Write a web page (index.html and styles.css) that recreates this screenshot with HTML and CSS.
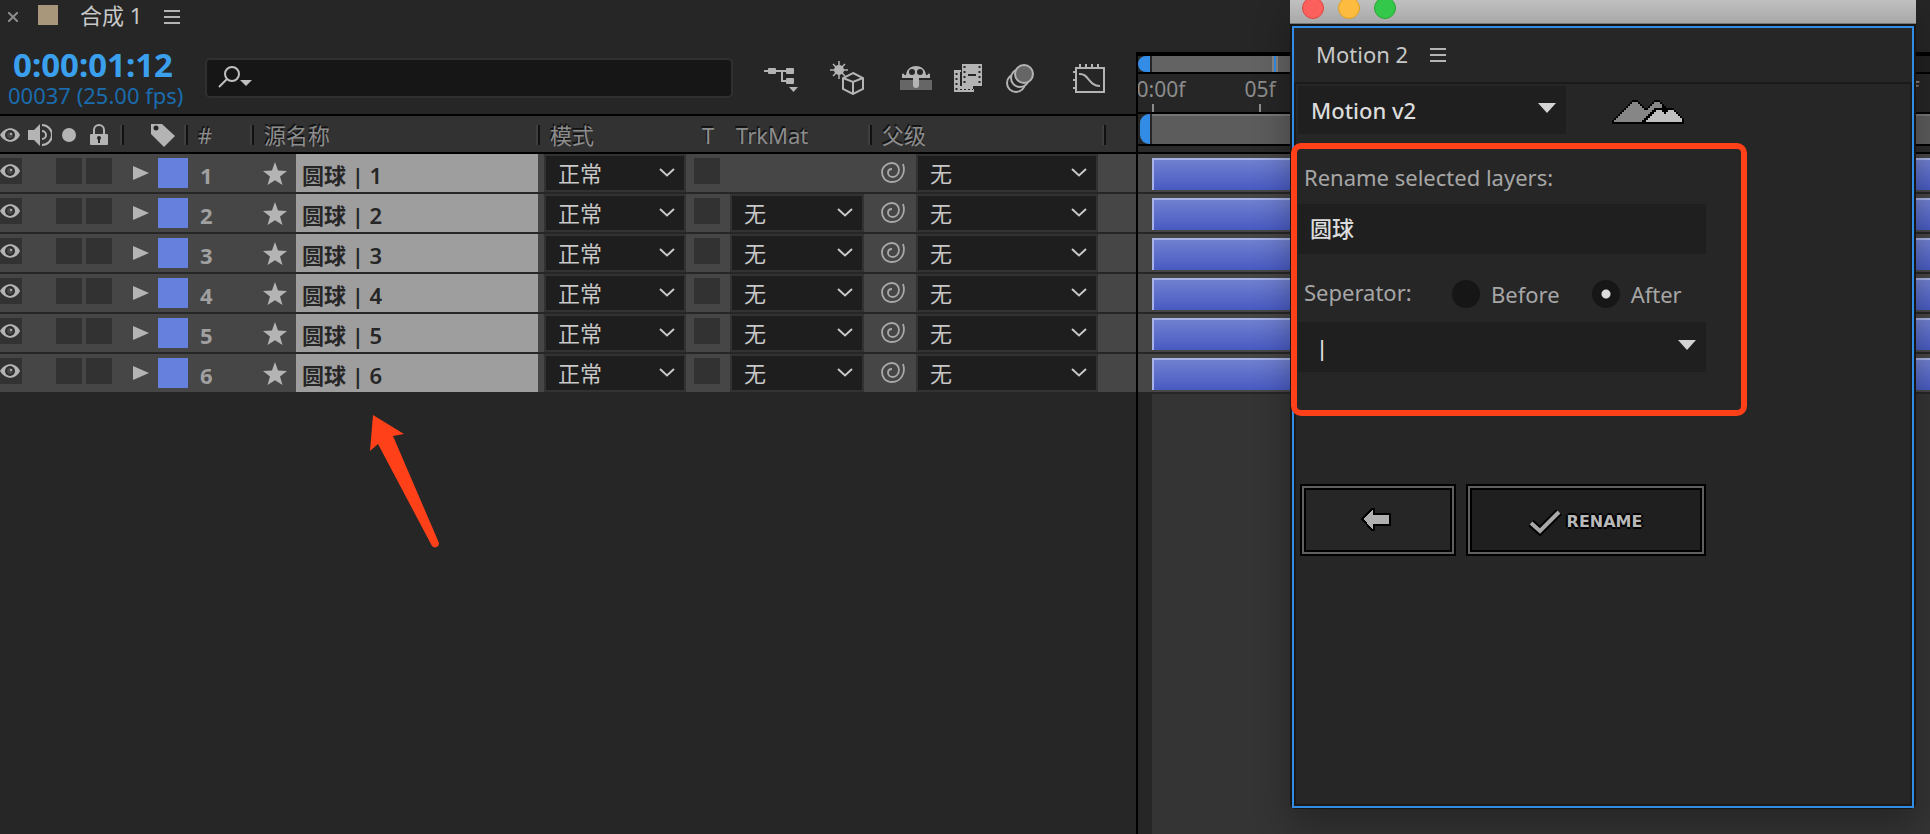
FILE: index.html
```
<!DOCTYPE html>
<html lang="zh-CN">
<head>
<meta charset="utf-8">
<title>合成 1</title>
<link rel="stylesheet" href="styles.css">
</head>
<body>
<svg class="defs" aria-hidden="true">
  <symbol id="eye" viewBox="0 0 22 16"><path d="M0 8C5 -1 16 -1 20 8C16 17 5 17 0 8Z" fill="#b4b4b4"/><circle cx="10" cy="8" r="5" fill="#2e2e2e"/><circle cx="10" cy="8" r="3" fill="#4a4a4a"/><circle cx="11" cy="7" r="1" fill="#ccc"/></symbol>
  <symbol id="star" viewBox="0 0 24 24"><path d="M12 0L15 8.500L24 9L17 14.500L19.500 23L12 18.200L4.500 23L7 14.500L0 9L9 8.500Z" fill="#b4b4b4"/></symbol>
  <symbol id="chevron" viewBox="0 0 16 10"><path d="M1 1L8 7.500L15 1" fill="none" stroke="#c8c8c8" stroke-width="2"/></symbol>
  <symbol id="swirl" viewBox="0 0 24 22"><path d="M22 2C25 11 20 20 11 20C4 20 1 15 1 10C1 5 6 1 11 1C16 1 18 5 18 8C18 12 15 15 12 15C9 15 7 13 7 11C7 9 8 7 11 7" fill="none" stroke="#a8a8a8" stroke-width="1.800"/></symbol>
  <symbol id="twirl" viewBox="0 0 16 14"><path d="M0 0L16 7L0 14Z" fill="#b4b4b4"/></symbol>
  <symbol id="menu" viewBox="0 0 16 14"><path d="M0 1H16M0 7H16M0 13H16" stroke="#b4b4b4" stroke-width="2"/></symbol>
  <symbol id="drop" viewBox="0 0 18 10"><path d="M0 0H18L9 10Z" fill="#d4d4d4"/></symbol>
</svg>

<main class="workspace">
  <section class="layers-panel">
    <header class="tab">
      <button class="icon-btn" aria-label="关闭"><svg width="10" height="10"><path d="M0 0L10 10M10 0L0 10" stroke="#8c8c8c" stroke-width="2"/></svg></button>
      <span class="swatch"></span>
      <h1 class="tab-title">合成 1</h1>
      <button class="icon-btn" aria-label="菜单"><svg width="16" height="14"><use href="#menu"/></svg></button>
    </header>

    <div class="toolbar">
      <div class="time">
        <div class="timecode">0:00:01:12</div>
        <div class="frames">00037 (25.00 fps)</div>
      </div>
      <label class="search">
        <svg width="36" height="24"><circle cx="14" cy="8" r="7" fill="none" stroke="#c0c0c0" stroke-width="2"/><path d="M9 13L1 21" stroke="#c0c0c0" stroke-width="2"/><path d="M22 14H34L28 20Z" fill="#c0c0c0"/></svg>
        <input type="text" aria-label="搜索">
      </label>
      <div class="tools">
        <button class="tool" aria-label="流程图"><svg width="34" height="32"><path d="M0 9H28M18 9V19H24" fill="none" stroke="#b4b4b4" stroke-width="2"/><rect x="4" y="6" width="8" height="6" rx="1" fill="#b4b4b4"/><rect x="22" y="6" width="8" height="6" rx="1" fill="#b4b4b4"/><rect x="22" y="16" width="8" height="6" rx="1" fill="#b4b4b4"/><path d="M25 25H34L29.500 30Z" fill="#b4b4b4"/></svg></button>
        <button class="tool" aria-label="草图 3D"><svg width="34" height="34"><circle cx="9" cy="9" r="5" fill="#b4b4b4"/><path d="M9 0V18M0 9H18M3 3L15 15M15 3L3 15" stroke="#b4b4b4" stroke-width="1.500"/><path d="M23 12L33 17V28L23 33L13 28V17Z" fill="#262626" stroke="#b4b4b4" stroke-width="2"/><path d="M13 17L23 21L33 17M23 21V33" fill="none" stroke="#b4b4b4" stroke-width="2"/></svg></button>
      </div>
      <div class="tools">
        <button class="tool narrow" aria-label="隐藏"><svg width="32" height="30"><rect y="17" width="32" height="10" fill="#666"/><path d="M2 15V11C4 9 4 13 6 12C7 0 25 0 26 12C28 13 28 9 30 11V15Z" fill="#b4b4b4"/><path d="M13 11H19V22A3 3 0 0 1 13 22Z" fill="#b4b4b4"/><circle cx="12" cy="9" r="3" fill="#262626"/><circle cx="20" cy="9" r="3" fill="#262626"/><rect x="13" y="12" width="6" height="6" fill="#b4b4b4"/></svg></button>
        <button class="tool narrow" aria-label="帧混合"><svg width="28" height="30"><rect x="8" y="1" width="20" height="22" fill="#b4b4b4"/><path d="M0 7H7V9H6V23H19V26H20V29H0Z" fill="#b4b4b4"/><path d="M10.500 3V22M25.500 3V22" stroke="#262626" stroke-width="2" stroke-dasharray="2 3"/><path d="M14 12H22" stroke="#262626" stroke-width="2"/><path d="M2.500 10V27" stroke="#262626" stroke-width="2" stroke-dasharray="2 3"/><path d="M6 26.500H19" stroke="#262626" stroke-dasharray="2 2"/></svg></button>
        <button class="tool narrow" aria-label="运动模糊"><svg width="28" height="30"><g stroke="#b4b4b4" stroke-width="2"><circle cx="10" cy="20" r="9" fill="#262626"/><circle cx="14" cy="15" r="9" fill="#262626"/><circle cx="18" cy="11" r="9" fill="#666"/></g></svg></button>
      </div>
      <div class="tools">
        <button class="tool" aria-label="图表编辑器"><svg width="32" height="32"><path d="M3 6H31V30H3ZM7 6V2M13 6V2M19 6V2M25 6V2M3 10H0M3 18H0M3 26H0" fill="none" stroke="#b4b4b4" stroke-width="2"/><path d="M6 12C16 11 15 24 27 24" fill="none" stroke="#b4b4b4" stroke-width="2"/></svg></button>
      </div>
    </div>

    <table class="layers">
      <colgroup><col class="c-av"><col class="c-label"><col class="c-num"><col class="c-name"><col class="c-mode"><col class="c-t"><col class="c-trk"><col class="c-parent"><col class="c-rest"></colgroup>
      <thead>
        <tr>
          <th class="sep"><div class="av-head">
            <svg width="22" height="16"><use href="#eye"/></svg>
            <svg width="24" height="24"><path d="M0 7H6L12 1V23L6 17H0Z" fill="#b4b4b4"/><path d="M14 8A4 4 0 0 1 14 16M14 2A10 10 0 0 1 14 22" fill="none" stroke="#b4b4b4" stroke-width="2"/></svg>
            <svg width="14" height="14"><circle cx="7" cy="7" r="7" fill="#b4b4b4"/></svg>
            <svg width="18" height="22"><rect y="10" width="18" height="11" rx="1" fill="#b4b4b4"/><path d="M4 10V6A5 5 0 0 1 14 6V10" fill="none" stroke="#b4b4b4" stroke-width="2"/><circle cx="9" cy="14" r="2" fill="#262626"/><rect x="8" y="14" width="2" height="5" fill="#262626"/></svg>
          </div></th>
          <th class="sep"><svg class="tag" width="24" height="24"><path d="M0 1H11L24 13L13 24L0 11Z" fill="#b4b4b4"/><circle cx="5" cy="5" r="2.500" fill="#262626"/></svg></th>
          <th class="sep">#</th>
          <th class="sep">源名称</th>
          <th>模式</th>
          <th class="t-head">T</th>
          <th class="sep trk-head">TrkMat</th>
          <th class="sep">父级</th>
          <th></th>
        </tr>
      </thead>
      <tbody>
        <tr>
          <td class="av"><div class="switches"><i class="box eye"><svg width="22" height="16"><use href="#eye"/></svg></i><i class="box"></i><i class="box"></i></div></td>
          <td><div class="label"><svg width="16" height="14"><use href="#twirl"/></svg><i class="color"></i></div></td>
          <td class="num">1</td>
          <td class="name-cell"><div class="name"><span class="kind"><svg width="24" height="24"><use href="#star"/></svg></span><span class="name-text">圆球 | 1</span></div></td>
          <td class="mode"><label class="pick"><select aria-label="模式"><option>正常</option></select><svg width="16" height="10"><use href="#chevron"/></svg></label></td>
          <td><i class="box t-box"></i></td>
          <td></td>
          <td><div class="parent"><svg width="24" height="22"><use href="#swirl"/></svg><label class="pick"><select aria-label="父级"><option>无</option></select><svg width="16" height="10"><use href="#chevron"/></svg></label></div></td>
          <td></td>
        </tr>
        <tr>
          <td class="av"><div class="switches"><i class="box eye"><svg width="22" height="16"><use href="#eye"/></svg></i><i class="box"></i><i class="box"></i></div></td>
          <td><div class="label"><svg width="16" height="14"><use href="#twirl"/></svg><i class="color"></i></div></td>
          <td class="num">2</td>
          <td class="name-cell"><div class="name"><span class="kind"><svg width="24" height="24"><use href="#star"/></svg></span><span class="name-text">圆球 | 2</span></div></td>
          <td class="mode"><label class="pick"><select aria-label="模式"><option>正常</option></select><svg width="16" height="10"><use href="#chevron"/></svg></label></td>
          <td><i class="box t-box"></i></td>
          <td class="trk"><label class="pick"><select aria-label="TrkMat"><option>无</option></select><svg width="16" height="10"><use href="#chevron"/></svg></label></td>
          <td><div class="parent"><svg width="24" height="22"><use href="#swirl"/></svg><label class="pick"><select aria-label="父级"><option>无</option></select><svg width="16" height="10"><use href="#chevron"/></svg></label></div></td>
          <td></td>
        </tr>
        <tr>
          <td class="av"><div class="switches"><i class="box eye"><svg width="22" height="16"><use href="#eye"/></svg></i><i class="box"></i><i class="box"></i></div></td>
          <td><div class="label"><svg width="16" height="14"><use href="#twirl"/></svg><i class="color"></i></div></td>
          <td class="num">3</td>
          <td class="name-cell"><div class="name"><span class="kind"><svg width="24" height="24"><use href="#star"/></svg></span><span class="name-text">圆球 | 3</span></div></td>
          <td class="mode"><label class="pick"><select aria-label="模式"><option>正常</option></select><svg width="16" height="10"><use href="#chevron"/></svg></label></td>
          <td><i class="box t-box"></i></td>
          <td class="trk"><label class="pick"><select aria-label="TrkMat"><option>无</option></select><svg width="16" height="10"><use href="#chevron"/></svg></label></td>
          <td><div class="parent"><svg width="24" height="22"><use href="#swirl"/></svg><label class="pick"><select aria-label="父级"><option>无</option></select><svg width="16" height="10"><use href="#chevron"/></svg></label></div></td>
          <td></td>
        </tr>
        <tr>
          <td class="av"><div class="switches"><i class="box eye"><svg width="22" height="16"><use href="#eye"/></svg></i><i class="box"></i><i class="box"></i></div></td>
          <td><div class="label"><svg width="16" height="14"><use href="#twirl"/></svg><i class="color"></i></div></td>
          <td class="num">4</td>
          <td class="name-cell"><div class="name"><span class="kind"><svg width="24" height="24"><use href="#star"/></svg></span><span class="name-text">圆球 | 4</span></div></td>
          <td class="mode"><label class="pick"><select aria-label="模式"><option>正常</option></select><svg width="16" height="10"><use href="#chevron"/></svg></label></td>
          <td><i class="box t-box"></i></td>
          <td class="trk"><label class="pick"><select aria-label="TrkMat"><option>无</option></select><svg width="16" height="10"><use href="#chevron"/></svg></label></td>
          <td><div class="parent"><svg width="24" height="22"><use href="#swirl"/></svg><label class="pick"><select aria-label="父级"><option>无</option></select><svg width="16" height="10"><use href="#chevron"/></svg></label></div></td>
          <td></td>
        </tr>
        <tr>
          <td class="av"><div class="switches"><i class="box eye"><svg width="22" height="16"><use href="#eye"/></svg></i><i class="box"></i><i class="box"></i></div></td>
          <td><div class="label"><svg width="16" height="14"><use href="#twirl"/></svg><i class="color"></i></div></td>
          <td class="num">5</td>
          <td class="name-cell"><div class="name"><span class="kind"><svg width="24" height="24"><use href="#star"/></svg></span><span class="name-text">圆球 | 5</span></div></td>
          <td class="mode"><label class="pick"><select aria-label="模式"><option>正常</option></select><svg width="16" height="10"><use href="#chevron"/></svg></label></td>
          <td><i class="box t-box"></i></td>
          <td class="trk"><label class="pick"><select aria-label="TrkMat"><option>无</option></select><svg width="16" height="10"><use href="#chevron"/></svg></label></td>
          <td><div class="parent"><svg width="24" height="22"><use href="#swirl"/></svg><label class="pick"><select aria-label="父级"><option>无</option></select><svg width="16" height="10"><use href="#chevron"/></svg></label></div></td>
          <td></td>
        </tr>
        <tr>
          <td class="av"><div class="switches"><i class="box eye"><svg width="22" height="16"><use href="#eye"/></svg></i><i class="box"></i><i class="box"></i></div></td>
          <td><div class="label"><svg width="16" height="14"><use href="#twirl"/></svg><i class="color"></i></div></td>
          <td class="num">6</td>
          <td class="name-cell"><div class="name"><span class="kind"><svg width="24" height="24"><use href="#star"/></svg></span><span class="name-text">圆球 | 6</span></div></td>
          <td class="mode"><label class="pick"><select aria-label="模式"><option>正常</option></select><svg width="16" height="10"><use href="#chevron"/></svg></label></td>
          <td><i class="box t-box"></i></td>
          <td class="trk"><label class="pick"><select aria-label="TrkMat"><option>无</option></select><svg width="16" height="10"><use href="#chevron"/></svg></label></td>
          <td><div class="parent"><svg width="24" height="22"><use href="#swirl"/></svg><label class="pick"><select aria-label="父级"><option>无</option></select><svg width="16" height="10"><use href="#chevron"/></svg></label></div></td>
          <td></td>
        </tr>
      </tbody>
    </table>

    <svg class="arrow-note" width="74" height="138" aria-hidden="true"><path d="M5 2L36 21L25 23L71 130A4 4 0 0 1 64 133L10 31L2 38Z" fill="#ff4018"/></svg>
  </section>

  <section class="timeline">
    <div class="timeline-inner">
      <div class="navigator"><i class="handle"></i><i class="nav-bar"><i class="playhead"></i></i><i class="nav-rest"></i></div>
      <div class="ruler">
        <div class="mark first"><span>0:00f</span></div>
        <div class="mark"><span>05f</span></div>
        <div class="mark last"><span>10f</span></div>
      </div>
      <div class="work-area"><i class="handle"></i><i class="work-bar"></i></div>
      <div class="track-gap"></div>
      <div class="track"><i class="clip"></i></div>
      <div class="track"><i class="clip"></i></div>
      <div class="track"><i class="clip"></i></div>
      <div class="track"><i class="clip"></i></div>
      <div class="track"><i class="clip"></i></div>
      <div class="track"><i class="clip"></i></div>
      <div class="empty"></div>
    </div>

    <aside class="window">
      <div class="titlebar">
        <button class="light red" aria-label="关闭"></button><button class="light yellow" aria-label="最小化"></button><button class="light green" aria-label="缩放"></button>
      </div>
      <div class="panel">
        <header class="panel-head">
          <h2>Motion 2</h2>
          <button class="icon-btn" aria-label="菜单"><svg width="16" height="14"><use href="#menu"/></svg></button>
        </header>
        <form class="panel-body">
          <div class="version">
            <label class="field-select version-select"><select aria-label="版本"><option>Motion v2</option></select><svg width="18" height="10"><use href="#drop"/></svg></label>
            <svg width="72" height="24" viewBox="0 0 36 12" shape-rendering="crispEdges">
              <path stroke="#000" d="M10 .5H13M21 .5H24M9 1.500H14M20 1.500H25M8 2.500H15M19 2.500H26M7 3.500H16M18 3.500H27M6 4.500H31M5 5.500H32M4 6.500H33M3 7.500H34M2 8.500H35M1 9.500H36M0 10.500H36M0 11.500H36"/>
              <path stroke="#868686" d="M10 1.500H13M21 1.500H24M9 2.500H14M20 2.500H25M8 3.500H15M19 3.500H25M7 4.500H16M18 4.500H21M6 5.500H20M5 6.500H19M4 7.500H18M3 8.500H17M2 9.500H16M1 10.500H15"/>
              <path stroke="#c0c0c0" d="M22 5.500H25M28 5.500H31M21 6.500H26M27 6.500H32M20 7.500H33M19 8.500H34M18 9.500H35M17 10.500H35"/>
            </svg>
          </div>
          <label class="caption" for="base">Rename selected layers:</label>
          <input class="field" id="base" type="text" value="圆球">
          <fieldset class="separator">
            <legend>Seperator:</legend>
            <label class="radio"><input type="radio" name="pos">Before</label>
            <label class="radio"><input type="radio" name="pos" checked>After</label>
          </fieldset>
          <label class="field-select"><select class="bar-select" aria-label="Seperator"><option>|</option></select><svg width="18" height="10"><use href="#drop"/></svg></label>
          <div class="actions">
            <button type="button" class="action" aria-label="返回"><svg width="32" height="28" viewBox="0 0 32 28" shape-rendering="crispEdges"><path d="M2 13L12 3H14V8H30V19H14V24H12Z" fill="#b0b0b0" stroke="#000" stroke-width="2"/></svg></button>
            <button type="button" class="action rename"><svg width="35" height="28" viewBox="0 0 35 28"><path d="M3 15L12 23L31 4" fill="none" stroke="#000" stroke-width="8"/><path d="M3 15L12 23L31 4" fill="none" stroke="#a8a8a8" stroke-width="4"/></svg><span>RENAME</span></button>
          </div>
        </form>
      </div>
      <div class="frame-note" aria-hidden="true"></div>
    </aside>
  </section>
</main>
</body>
</html>
```
FILE: styles.css
```
* { box-sizing: border-box; }

body {
  margin: 0;
  background: #262626;
  color: #c8c8c8;
  font: 22px/30px "Noto Sans", "Noto Sans CJK SC", sans-serif;
}

button, input, select { font: inherit; color: inherit; margin: 0; }
svg { display: block; flex: none; }
i { display: block; }
.defs { position: absolute; width: 0; height: 0; }

.workspace {
  display: grid;
  grid-template-columns: minmax(0, 1136fr) minmax(0, 794fr);
  height: 100vh;
  overflow: hidden;
}

.icon-btn { border: 0; padding: 0; background: none; }

/* Layers panel */
.layers-panel { position: relative; }
.tab { display: flex; align-items: center; height: 34px; padding-left: 8px; }
.swatch { width: 20px; height: 20px; margin: 0 22px 4px 20px; background: #a8977a; }
.tab-title { margin: 0 22px 4px 0; font-size: 22px; font-weight: 400; }

.toolbar { display: flex; align-items: center; height: 80px; padding: 8px 14px 0 0; }
.time { width: 205px; padding-left: 8px; }
.timecode { padding-left: 5px; font-size: 33px; font-weight: 700; line-height: 34px; color: #3aa0ee; }
.frames { line-height: 26px; color: #1a6cae; }

.search {
  display: flex;
  flex: 1;
  align-items: center;
  height: 40px;
  margin: 0 5px 0 0;
  padding: 0 11px;
  background: #161616;
  border: 2px solid #303030;
  border-radius: 5px;
}
.search input { flex: 1; min-width: 0; border: 0; background: none; outline: 0; }

.tools { display: flex; margin-left: 10px; }
.tool { display: flex; justify-content: center; align-items: center; width: 66px; height: 40px; padding: 0; border: 0; background: none; }
.narrow { width: 52px; }

.layers { width: 100%; table-layout: fixed; border-collapse: separate; border-spacing: 0; }
.c-av { width: 124px; }
.c-label { width: 64px; }
.c-num { width: 66px; }
.c-mode { width: 150px; }
.c-t { width: 40px; }
.c-trk { width: 142px; }
.c-parent { width: 234px; }
.c-rest { width: 30px; }

.layers th {
  height: 40px;
  padding: 2px 0 0 10px;
  background: #323232;
  border-top: 2px solid #000;
  border-bottom: 2px solid #000;
  font-weight: 400;
  line-height: 34px;
  text-align: left;
  color: #8c8c8c;
  text-shadow: -1px -2px 0 #111;
}
.layers th.sep {
  background:
    linear-gradient(#111, #111) right 0 top 9px / 2px 20px no-repeat,
    linear-gradient(#3e3e3e, #3e3e3e) right 2px top 9px / 2px 20px no-repeat,
    #323232;
}
.layers th:first-child { padding-left: 0; }
.layers th.t-head { padding-left: 12px; }
.layers th.trk-head { padding-left: 6px; }
.av-head { display: flex; align-items: center; }
.av-head svg + svg { margin-left: 6px; }
.av-head svg:nth-child(3) { margin-left: 10px; }
.av-head svg:nth-child(4) { margin-left: 14px; }
.tag { margin-left: 17px; }

.layers td { height: 40px; padding: 0; background: #464646; border-bottom: 2px solid #262626; vertical-align: top; }
.box { width: 26px; height: 26px; background: #323232; }
.switches { display: flex; gap: 4px; padding-top: 4px; }
.eye { width: 22px; margin-right: 30px; padding-top: 5px; }
.label { display: flex; align-items: center; gap: 9px; padding: 4px 0 0 9px; }
.color { width: 30px; height: 30px; background: #6680de; }
.layers .num { padding: 6px 0 0 12px; font-weight: 700; color: #a0a0a0; }
.name { display: flex; height: 38px; padding-right: 2px; }
.kind { width: 42px; padding: 8px 0 0 9px; }
.name-text { flex: 1; padding: 6px 6px 0; background: #9e9e9e; color: #262626; font-weight: 600; white-space: nowrap; }
.layers .mode { padding: 0 4px; }
.t-box { margin: 4px; }
.layers .trk { padding-right: 8px; }
.parent { display: flex; }
.parent > svg { margin: 8px 11px 0 9px; }
.parent .pick { flex: 1; margin-right: 8px; }

/* select and its chevron share one grid cell */
.pick, .field-select { display: grid; align-items: center; }
.pick > *, .field-select > * { grid-area: 1 / 1; }
.pick > svg { justify-self: end; margin-right: 11px; pointer-events: none; }
.pick select {
  width: 100%;
  height: 38px;
  padding: 0 12px;
  appearance: none;
  background: #1e1e1e;
  border: 2px solid #323232;
  border-radius: 0;
}

.arrow-note { position: absolute; left: 368px; top: 413px; }

/* Timeline */
.timeline { position: relative; padding-top: 52px; }
.timeline-inner { display: flex; flex-direction: column; height: 100%; border-left: 2px solid #000; overflow: hidden; }
.navigator { display: flex; flex: none; height: 22px; border: solid #000; border-width: 4px 0 2px; }
.handle { flex: none; width: 12px; margin-right: 2px; background: #328ce6; border-radius: 9px 0 0 9px; }
.nav-bar { flex: 1; background: #636363; }
.nav-rest { width: 20px; background: #212121; }
.playhead { width: 6px; height: 100%; margin-left: 120px; background: #328ce6; border: solid #888; border-width: 0 2px; }
.ruler { display: flex; flex: none; height: 38px; color: #8c8c8c; font-size: 21px; line-height: 30px; }
.mark { display: flex; flex-direction: column; justify-content: space-between; align-items: center; width: 60px; }
.mark::after { content: ""; width: 2px; height: 8px; background: #8c8c8c; }
.mark.first { width: 46px; margin-right: 46px; }
.mark.first::after { align-self: flex-start; margin-left: 14px; }
.mark.last { width: 54px; margin-left: auto; }
.work-area { display: flex; flex: none; height: 34px; border: solid #000; border-width: 2px 0; }
.work-bar { flex: 1; background: #5c5c5c; border-top: 2px solid #757575; }
.work-area .handle { width: 10px; margin-left: 2px; }
.track-gap { flex: none; height: 8px; border-bottom: 2px solid #000; background: #2a2a2a; }
.track { flex: none; height: 40px; padding: 4px 0 2px 14px; background: #464646; border-bottom: 2px solid #262626; }
.clip { height: 32px; background: linear-gradient(#7080d0, #485ac2); border: solid #a6b2e8; border-width: 2px 0 0 2px; }
.empty { flex: 1; margin-left: 14px; background: #343434; }

/* Floating window */
.window {
  position: absolute;
  top: 0;
  right: 14px;
  bottom: 25px;
  left: 154px;
  display: flex;
  flex-direction: column;
  background: #161616;
  border-radius: 0 0 6px 6px;
  box-shadow: 0 16px 36px rgba(0, 0, 0, .3);
}
.titlebar { display: flex; gap: 14px; height: 24px; padding-left: 12px; background: linear-gradient(#c0c0c0, #a8a8a8); border-bottom: 1px solid #777; overflow: hidden; }
.light { width: 22px; height: 22px; margin-top: -3px; padding: 0; border-radius: 50%; }
.red { background: #fc605c; border: 1px solid #de4643; }
.yellow { background: #fdbc40; border: 1px solid #dfa023; }
.green { background: #34c84a; border: 1px solid #27a732; }

.panel { display: flex; flex: 1; flex-direction: column; margin: 2px 2px 1px; border: 2px solid #328ce6; background: #262626; }
.panel-head { display: flex; align-items: center; gap: 22px; height: 54px; padding-left: 22px; }
.panel-head h2 { margin: 0 0 2px; font-size: 22px; font-weight: 400; }
.panel-body { flex: 1; padding: 2px; border: 2px solid #1a1a1a; }
.version { display: flex; align-items: center; gap: 46px; }
.version svg:last-child { margin-top: 4px; }
.version-select { width: 268px; }
.version .version-select svg { margin: 0 10px 4px 0; }
.field-select { max-width: 408px; color: #dcdcdc; }
.field-select select { width: 100%; height: 50px; padding: 0 13px; appearance: none; background: #1f1f1f; border: 0; border-radius: 0; font-weight: 500; }
.version .field-select select { height: 48px; }
.field-select .bar-select { padding-left: 18px; }
.field-select > svg { justify-self: end; margin: 0 10px 4px 0; pointer-events: none; }
.caption { display: block; margin-top: 27px; padding-left: 6px; line-height: 32px; color: #a6a6a6; }
.field { display: block; width: 408px; max-width: 100%; height: 50px; margin-top: 11px; padding: 0 12px 4px; border: 0; background: #1f1f1f; color: #dcdcdc; font-weight: 500; outline: 0; }
.separator { display: flex; align-items: center; gap: 32px; height: 68px; margin: 0; padding: 12px 0 0 154px; border: 0; color: #a6a6a6; }
.separator legend { float: left; width: 148px; margin: 0 -32px 4px -148px; padding: 0; }
.radio { display: flex; align-items: center; gap: 11px; }
.radio input { width: 28px; height: 28px; appearance: none; border-radius: 50%; background: #161616; }
.radio input:checked { background: radial-gradient(circle, #dcdcdc 4px, #161616 5px); }

.actions { display: flex; gap: 10px; margin: 112px 0 0 2px; }
.action {
  display: flex;
  justify-content: center;
  align-items: center;
  gap: 4px;
  width: 156px;
  height: 72px;
  padding: 0 4px 0 0;
  background: #262626;
  border: 2px solid #000;
  box-shadow: inset 0 0 0 2px #606060, inset 0 0 0 4px #000;
}
.rename { width: 240px; padding: 4px 2px 0 0; background: #1f1f1f; color: #b8b8b8; font: 700 16px/20px "DejaVu Sans", sans-serif; text-shadow: 2px 0 #000, -2px 0 #000, 0 2px #000, 0 -2px #000; }

.frame-note { position: absolute; top: 143px; left: 1px; width: 456px; height: 273px; border: 6px solid #ff4018; border-radius: 10px; }
```
